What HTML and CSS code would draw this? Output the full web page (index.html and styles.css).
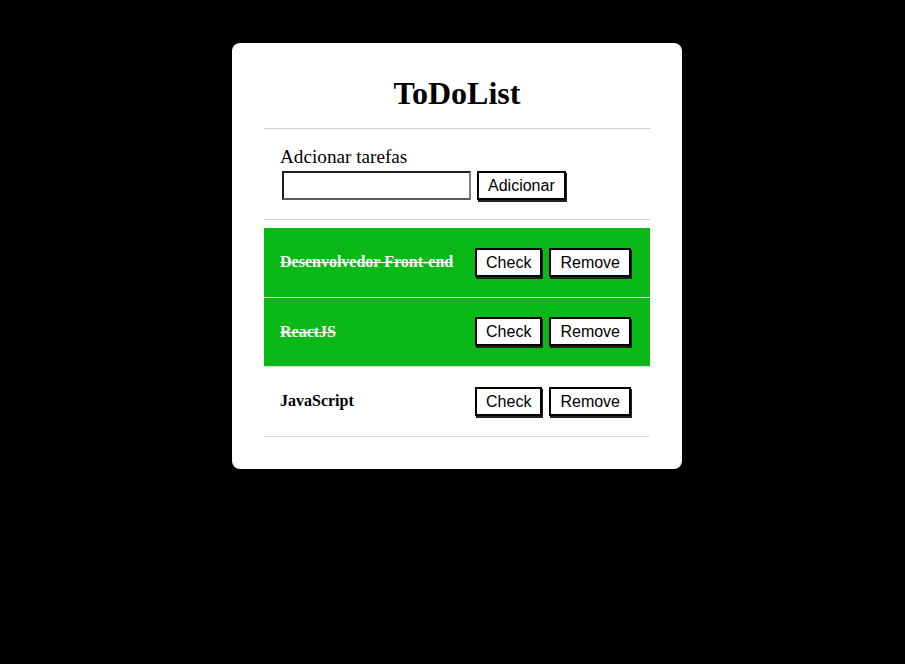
FILE: index.html
```html
<!DOCTYPE html>
<html lang="pt-BR">
<head>
<meta charset="utf-8">
<title>ToDoList</title>
<link rel="stylesheet" href="styles.css">
</head>
<body>
<main class="card">
  <h1 class="title">ToDoList</h1>
  <section class="add">
    <label class="add-label" for="task">Adcionar tarefas</label>
    <div class="add-row">
      <input class="add-input" id="task" type="text">
      <button class="btn">Adicionar</button>
    </div>
  </section>
  <ul class="list">
    <li class="item done">
      <span class="item-text">Desenvolvedor Front-end</span>
      <div class="actions"><button class="btn">Check</button><button class="btn">Remove</button></div>
    </li>
    <li class="item done">
      <span class="item-text">ReactJS</span>
      <div class="actions"><button class="btn">Check</button><button class="btn">Remove</button></div>
    </li>
    <li class="item">
      <span class="item-text">JavaScript</span>
      <div class="actions"><button class="btn">Check</button><button class="btn">Remove</button></div>
    </li>
  </ul>
</main>
</body>
</html>
```
FILE: styles.css
```css
html, body {
  margin: 0;
  padding: 0;
  background: #000;
  font-family: "Liberation Serif", "Times New Roman", serif;
}

.card {
  width: 450px;
  box-sizing: border-box;
  margin: 43px 0 0 232px;
  padding: 32px;
  background: #fff;
  border-radius: 8px;
}

.title {
  margin: 0 0 16px;
  font-size: 32px;
  font-weight: bold;
  text-align: center;
  line-height: 37px;
  color: #000;
}

.add {
  display: flex;
  flex-direction: column;
  border-top: 1px solid #cfcfcf;
  border-bottom: 1px solid #cfcfcf;
  padding: 17px 16px 19px;
}

.add-label {
  font-size: 19.2px;
  line-height: 22px;
  color: #000;
}

.add-row {
  display: flex;
  align-items: center;
  gap: 6px;
  margin-top: 3px;
  padding-left: 2px;
}

.add-input {
  width: 189px;
  height: 29px;
  box-sizing: border-box;
  margin: 0;
  padding: 1px 2px;
  border: 2px solid;
  border-color: #1f1f1f #808080 #5a5a5a #1f1f1f;
  background: #fff;
  font: 16px "Liberation Sans", Arial, sans-serif;
}

.btn {
  height: 29px;
  box-sizing: border-box;
  margin: 0;
  padding: 1px 9px 0;
  border: 2px solid #000;
  box-shadow: 1px 2px 0 #222;
  background: #fff;
  color: #000;
  font: 16px/18px "Liberation Sans", Arial, sans-serif;
}

.list {
  list-style: none;
  margin: 8px 0 0;
  padding: 0;
}

.item {
  display: flex;
  align-items: center;
  justify-content: space-between;
  height: 69.5px;
  box-sizing: border-box;
  padding: 0 19px 0 16px;
  border-bottom: 1px solid #dcdcdc;
}

.item.done {
  background: #0ab917;
}

.item-text {
  font-size: 16px;
  font-weight: bold;
  color: #000;
}

.item.done .item-text {
  color: #fff;
  text-decoration: line-through;
}

.actions {
  display: flex;
  gap: 7px;
}
```
